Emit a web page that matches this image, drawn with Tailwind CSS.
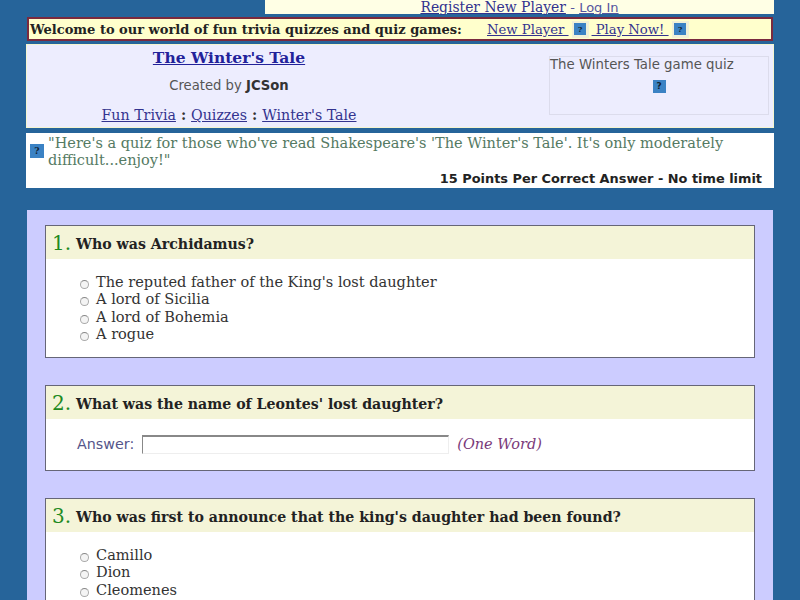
<!DOCTYPE html>
<html><head><meta charset="utf-8"><script src="https://cdn.jsdelivr.net/npm/@tailwindcss/browser@4"></script></head>
<body class="m-0 h-[600px] w-[800px] overflow-hidden bg-[#26649a] font-['DejaVu_Serif',serif]">
<div class="ml-[265px] mr-[26px] h-[14px] bg-[#ffffe5] text-center text-[13.9px] leading-[15px] text-[#33338f]"><a class="underline" href="#">Register New Player</a> <span class="font-['DejaVu_Sans',sans-serif] text-[13px] text-[#55559f]">- <a class="underline" href="#">Log In</a></span></div>
<div class="mx-[27px] mt-[3px] flex h-[24px] items-center border-2 border-[#7a2a3e] bg-[#ffffcc] pl-[1px] text-[13.2px] text-[#222]">
  <span class="w-[457px] shrink-0 pt-[1px] text-[13px] font-bold">Welcome to our world of fun trivia quizzes and quiz games:</span>
  <a class="pt-[1px] underline text-[#33338f]" href="#">New Player&nbsp;</a>
  <span class="mx-[3px] flex size-[17px] items-center justify-center bg-[#f0f0d8]"><span class="flex size-[12px] items-center justify-center bg-[#3b82c4] text-[8px] leading-none font-bold text-[#123]">?</span></span>
  <a class="pt-[1px] underline text-[#33338f]" href="#">&nbsp;Play Now!&nbsp;</a>
  <span class="mx-[3px] flex size-[17px] items-center justify-center bg-[#f0f0d8]"><span class="flex size-[12px] items-center justify-center bg-[#3b82c4] text-[8px] leading-none font-bold text-[#123]">?</span></span>
</div>
<div class="mx-[26px] mt-[3px] flex h-[84px] border border-[#f5f5d0] bg-[#ededfe]">
  <div class="w-[404px] shrink-0 text-center">
    <div class="mt-[1px] text-[15.5px] leading-[24px] font-bold"><a class="underline text-[#22229a]" href="#">The Winter's Tale</a></div>
    <div class="mt-[7px] font-['DejaVu_Sans',sans-serif] text-[13.2px] leading-[18px] text-[#555]">Created by <span class="font-bold text-[#333]">JCSon</span></div>
    <div class="mt-[11px] text-[14.2px] leading-[18px] font-bold text-[#333]"><a class="font-normal underline text-[#33338f]" href="#">Fun Trivia</a> : <a class="font-normal underline text-[#33338f]" href="#">Quizzes</a> : <a class="font-normal underline text-[#33338f]" href="#">Winter's Tale</a></div>
  </div>
  <div class="mt-[11px] ml-[118px] h-[59px] w-[220px] border border-[#dcdcec] font-['DejaVu_Sans',sans-serif] text-[13.3px] leading-[16px] text-[#555]">
    <div>The Winters Tale game quiz</div>
    <div class="mt-[7px] flex justify-center"><span class="flex size-[13px] items-center justify-center bg-[#3b82c4] text-[9px] leading-none font-bold text-[#123]">?</span></div>
  </div>
</div>
<div class="mx-[26px] mt-[5px] h-[55px] bg-white">
  <div class="flex">
    <span class="ml-[4px] mt-[11px] flex size-[14px] shrink-0 items-center justify-center bg-[#3b82c4] text-[9px] leading-none font-bold text-[#123]">?</span>
    <p class="m-0 ml-[4px] w-[700px] pt-[2px] text-[14.5px] leading-[17px] text-[#557a63]">"Here's a quiz for those who've read Shakespeare's 'The Winter's Tale'. It's only moderately difficult...enjoy!"</p>
  </div>
  <div class="mt-[1px] pr-[12px] text-right font-['DejaVu_Sans',sans-serif] text-[12.9px] leading-[18px] font-bold text-[#222]">15 Points Per Correct Answer - No time limit</div>
</div>
<main class="mx-[27px] mt-[22px] h-[500px] bg-[#ccccff] px-[18px] pt-[15px]">
  <section class="h-[133px] border border-[#666677] bg-white">
    <h2 class="m-0 flex h-[33px] items-center bg-[#f4f4d8] pl-[6px] text-[14.15px] font-bold text-[#222]"><span class="mr-[5px] text-[20px] font-normal text-[#1f8a1f]">1.</span><span class="pt-[4px]">Who was Archidamus?</span></h2>
    <ul class="m-0 mt-[14px] list-none pl-[34px] text-[14.55px] leading-[17.3px] text-[#333]">
      <li class="flex items-center"><span class="mt-[6px] mr-[7px] size-[9px] rounded-full border border-[#aaa] border-t-[#888] bg-[#f4f4f4]"></span>The reputed father of the King's lost daughter</li>
      <li class="flex items-center"><span class="mt-[6px] mr-[7px] size-[9px] rounded-full border border-[#aaa] border-t-[#888] bg-[#f4f4f4]"></span>A lord of Sicilia</li>
      <li class="flex items-center"><span class="mt-[6px] mr-[7px] size-[9px] rounded-full border border-[#aaa] border-t-[#888] bg-[#f4f4f4]"></span>A lord of Bohemia</li>
      <li class="flex items-center"><span class="mt-[6px] mr-[7px] size-[9px] rounded-full border border-[#aaa] border-t-[#888] bg-[#f4f4f4]"></span>A rogue</li>
    </ul>
  </section>
  <section class="mt-[27px] h-[86px] border border-[#666677] bg-white">
    <h2 class="m-0 flex h-[33px] items-center bg-[#f4f4d8] pl-[6px] text-[14.15px] font-bold text-[#222]"><span class="mr-[5px] text-[20px] font-normal text-[#1f8a1f]">2.</span><span class="pt-[4px]">What was the name of Leontes' lost daughter?</span></h2>
    <div class="mt-[15px] flex items-center pl-[31px] text-[14.5px]"><span class="font-['DejaVu_Sans',sans-serif] text-[14.3px] text-[#55558a]">Answer:</span>
      <span class="ml-[8px] h-[19px] w-[307px] border-t-2 border-l border-[#888] border-r border-b border-r-[#eee] border-b-[#eee]"></span>
      <em class="ml-[8px] text-[#7a3a7a]">(One Word)</em></div>
  </section>
  <section class="mt-[27px] h-[200px] border border-[#666677] bg-white">
    <h2 class="m-0 flex h-[33px] items-center bg-[#f4f4d8] pl-[6px] text-[14.15px] font-bold text-[#222]"><span class="mr-[5px] text-[20px] font-normal text-[#1f8a1f]">3.</span><span class="pt-[4px]">Who was first to announce that the king's daughter had been found?</span></h2>
    <ul class="m-0 mt-[14px] list-none pl-[34px] text-[14.55px] leading-[17.3px] text-[#333]">
      <li class="flex items-center"><span class="mt-[6px] mr-[7px] size-[9px] rounded-full border border-[#aaa] border-t-[#888] bg-[#f4f4f4]"></span>Camillo</li>
      <li class="flex items-center"><span class="mt-[6px] mr-[7px] size-[9px] rounded-full border border-[#aaa] border-t-[#888] bg-[#f4f4f4]"></span>Dion</li>
      <li class="flex items-center"><span class="mt-[6px] mr-[7px] size-[9px] rounded-full border border-[#aaa] border-t-[#888] bg-[#f4f4f4]"></span>Cleomenes</li>
    </ul>
  </section>
</main>
</body></html>
